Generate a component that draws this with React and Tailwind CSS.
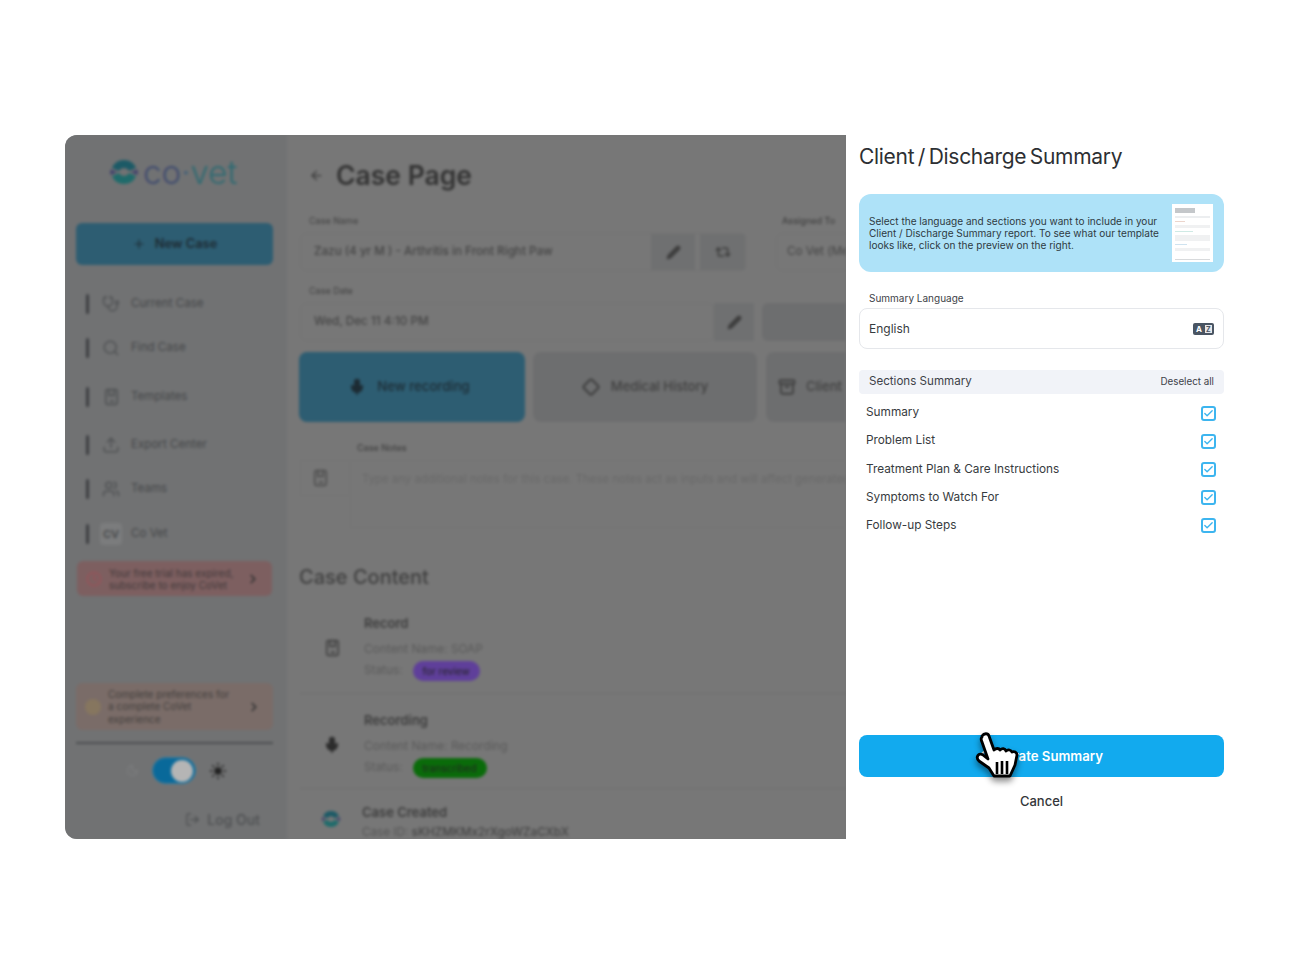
import React from "react";
import {
  ArrowLeft,
  Archive,
  ChevronRight,
  Clock,
  Diamond,
  LogOut,
  Mic,
  Moon,
  Pencil,
  Plus,
  Repeat2,
  Search,
  Stethoscope,
  Sun,
  Upload,
  Users,
  Check,
} from "lucide-react";

const font = { fontFamily: "Inter, 'Noto Sans', sans-serif" };

const NoteIcon = ({ className }) => (
  <svg viewBox="0 0 18 22" fill="none" stroke="currentColor" strokeWidth="2" className={className}>
    <rect x="2" y="2" width="14" height="18" rx="2" />
    <path d="M6 2v7h6V2M7 16h5" />
  </svg>
);

const LogoMark = ({ className }) => (
  <svg viewBox="0 0 30 30" fill="none" className={className}>
    <path d="M3 11A13 13 0 0 1 27 11L20 14C18 10 12 10 10 14z" fill="#1c5a66" />
    <path d="M1.5 12.5L8 15l-6.500 3a14 14 0 0 1 0-5.500z" fill="#3e3f6b" />
    <path d="M28.500 12.500L22 15l6.500 3a14 14 0 0 0 0-5.500z" fill="#3e3f6b" />
    <path d="M3 19A13 13 0 0 0 27 19L20 16C18 20 12 20 10 16z" fill="#1f6b6b" />
  </svg>
);

const navItems = [
  { label: "Current Case", icon: <Stethoscope size={18} />, mt: "mt-[29px]" },
  { label: "Find Case", icon: <Search size={18} />, mt: "mt-[24px]" },
  { label: "Templates", icon: <NoteIcon className="w-[15px] h-[18px]" />, mt: "mt-[29px]" },
  { label: "Export Center", icon: <Upload size={18} />, mt: "mt-[28px]" },
  { label: "Teams", icon: <Users size={18} />, mt: "mt-[24px]" },
];

const sections = [
  "Summary",
  "Problem List",
  "Treatment Plan & Care Instructions",
  "Symptoms to Watch For",
  "Follow-up Steps",
];

const Sidebar = () => (
  <aside className="w-[222px] h-[704px] shrink-0 bg-[#717273] pl-[11px] pr-[14px] pt-[19px] flex flex-col">
    <div className="flex items-center justify-center h-[36px] gap-[4px] pr-[3px]">
      <LogoMark className="w-[30px] h-[30px]" />
      <span className="text-[33px] font-light text-[#3e4a6e] leading-none">
        co<span className="text-[#3f5f78]">·</span>
        <span className="text-[#2f6a72]">vet</span>
      </span>
    </div>
    <button className="mt-[33px] h-[42px] rounded-md bg-[#2d5d72] flex items-center justify-center gap-[9px] text-[12.800px] font-semibold text-[#1d2b33]">
      <Plus size={14} /> New Case
    </button>
    {navItems.map((n) => (
      <div key={n.label} className={`${n.mt} h-[20px] flex items-center text-[#454749]`}>
        <span className="ml-[10px] w-[3px] h-[20px] rounded bg-[#3c3e41]" />
        <span className="ml-[13px] w-[18px] flex justify-center text-[#505254]">{n.icon}</span>
        <span className="ml-[11px] text-[11.600px]">{n.label}</span>
      </div>
    ))}
    <div className="mt-[25px] h-[20px] flex items-center text-[#454749]">
      <span className="ml-[10px] w-[3px] h-[20px] rounded bg-[#3c3e41]" />
      <span className="ml-[11px] w-[22px] h-[22px] rounded bg-[#7b7c7d] flex items-center justify-center text-[11px] font-semibold">
        CV
      </span>
      <span className="ml-[9px] text-[11.600px]">Co Vet</span>
    </div>
    <div className="mt-[17px] mx-[1px] h-[35px] rounded-md bg-[#7d5f60] flex items-center pl-[9px] pr-[12px]">
      <Clock size={16} className="text-[#9a5158] shrink-0" />
      <span className="ml-[7px] flex-1 text-[10px] leading-[12px] text-[#433a3b]">
        Your free trial has expired, subscribe to enjoy CoVet
      </span>
      <ChevronRight size={14} className="text-[#333] shrink-0" strokeWidth={3} />
    </div>
    <div className="mt-[87px] h-[47px] rounded-md bg-[#7a6c68] flex items-center pl-[9px] pr-[12px]">
      <span className="w-[16px] h-[16px] rounded-full bg-[#86765f] shrink-0" />
      <span className="ml-[7px] w-[128px] text-[10px] leading-[12.500px] text-[#433f3d]">
        Complete preferences for a complete CoVet experience
      </span>
      <ChevronRight size={14} className="ml-auto text-[#333] shrink-0" strokeWidth={3} />
    </div>
    <div className="mt-[12px] h-[2px] bg-[#4d4f51]" />
    <div className="mt-[13px] flex items-center justify-center gap-[13px] pl-[4px]">
      <Moon size={13} className="text-[#7e7f80]" />
      <span className="w-[44px] h-[27px] rounded-full bg-[#09699a] border border-[#3d7f9f] flex items-center justify-end pr-[2px]">
        <span className="w-[22px] h-[22px] rounded-full bg-[#b5b5b5]" />
      </span>
      <Sun size={18} className="text-[#222]" fill="#222" />
    </div>
    <div className="mt-[25px] flex items-center justify-end gap-[7px] pr-[13px] text-[#4d4f51]">
      <LogOut size={15} />
      <span className="text-[14px] font-medium">Log Out</span>
    </div>
  </aside>
);

const ContentRow = ({ icon, title, name, status, pill, mt }) => (
  <div className={`flex ${mt}`}>
    <div className="w-[64px] flex justify-center items-center">{icon}</div>
    <div>
      <div className="text-[13px] font-semibold leading-[16px] text-[#3c3c3c]">{title}</div>
      <div className="mt-[10px] text-[11.800px] leading-[16px] text-[#5a5a5a]">Content Name: {name}</div>
      <div className="mt-[4px] flex items-center h-[20px] text-[11.800px] text-[#5a5a5a]">
        Status:
        <span className={`ml-[10px] h-[20px] px-[10px] rounded-full flex items-center text-[10px] text-[#222] ${pill}`}>
          {status}
        </span>
      </div>
    </div>
  </div>
);

const MainArea = () => (
  <main className="flex-1 min-w-0 bg-[#777777] pl-[13px] pt-[22px] overflow-hidden">
    <div className="flex items-center pl-[9px] h-[36px] text-[#3a3a3a]">
      <ArrowLeft size={15} />
      <h1 className="ml-[12px] text-[26.500px] font-semibold leading-none text-[#333]">Case Page</h1>
    </div>
    <div className="mt-[22px] flex w-[600px]">
      <div className="w-[446px] shrink-0">
        <div className="pl-[9px] text-[9px] leading-[12px] text-[#3f3f3f]">Case Name</div>
        <div className="mt-[6px] h-[38px] flex border border-[#727272] rounded-md">
          <span className="flex-1 pl-[13px] self-center text-[11.700px] font-medium text-[#444] whitespace-nowrap">
            Zazu (4 yr M ) - Arthritis in Front Right Paw
          </span>
          <span className="w-[44px] bg-[#6f7071] flex items-center justify-center">
            <Pencil size={15} className="text-[#3e3e3e]" fill="#3e3e3e" />
          </span>
          <span className="w-[45px] ml-[5px] bg-[#6f7071] flex items-center justify-center">
            <Repeat2 size={16} className="text-[#3e3e3e]" strokeWidth={2.5} />
          </span>
        </div>
      </div>
      <div className="ml-[30px] shrink-0">
        <div className="pl-[6px] text-[9px] leading-[12px] font-medium text-[#3f3f3f]">Assigned To</div>
        <div className="mt-[6px] h-[38px] w-[200px] pl-[10px] flex items-center border border-[#727272] rounded-md text-[11.700px] text-[#444]">
          Co Vet (Me)
        </div>
      </div>
    </div>
    <div className="mt-[14px] pl-[9px] text-[9px] leading-[12px] text-[#3f3f3f]">Case Date</div>
    <div className="mt-[6px] flex w-[600px] h-[38px]">
      <div className="w-[414px] shrink-0 border border-[#727272] rounded-md pl-[13px] flex items-center text-[11.700px] font-medium text-[#444]">
        Wed, Dec 11 4:10 PM
      </div>
      <span className="w-[40px] shrink-0 bg-[#6f7071] flex items-center justify-center">
        <Pencil size={15} className="text-[#3e3e3e]" fill="#3e3e3e" />
      </span>
      <span className="ml-[8px] w-[200px] shrink-0 bg-[#6d6e6f] rounded-md" />
    </div>
    <div className="mt-[11px] -ml-px flex w-[700px] h-[70px] gap-[8px]">
      <div className="w-[226px] shrink-0 rounded-lg bg-[#2d5d72] flex items-center justify-center gap-[11px] pr-[6px] text-[13.200px] font-medium text-[#1d2b33]">
        <Mic size={18} fill="#1d2b33" />
        New recording
      </div>
      <div className="w-[224px] shrink-0 rounded-lg bg-[#6d6e6f] flex items-center justify-center gap-[11px] text-[13px] font-medium text-[#404040]">
        <Diamond size={18} strokeWidth={3} />
        Medical History
      </div>
      <div className="w-[224px] shrink-0 ml-[1px] rounded-lg bg-[#6d6e6f] flex items-center pl-[12px] gap-[10px] text-[13px] font-medium text-[#404040]">
        <Archive size={18} strokeWidth={2.5} />
        Client Summary
      </div>
    </div>
    <div className="mt-[20px] pl-[57px] text-[9px] leading-[12px] font-medium text-[#3f3f3f]">Case Notes</div>
    <div className="mt-[6px] flex w-[700px]">
      <div className="w-[50px] h-[36px] shrink-0 border border-[#747474] flex items-center justify-center pr-[10px] text-[#4e4e4e]">
        <NoteIcon className="w-[15px] h-[18px]" />
      </div>
      <div className="flex-1 h-[68px] border border-[#747474] pl-[11px] pt-[10px] text-[11.400px] text-[#686868] whitespace-nowrap overflow-hidden">
        Type any additional notes for this case. These notes act as inputs and will affect generated content.
      </div>
    </div>
    <h2 className="mt-[35px] -ml-px text-[20px] leading-[28px] font-medium text-[#404040]">Case Content</h2>
    <ContentRow
      mt="mt-[24px]"
      icon={<NoteIcon className="w-[15px] h-[18px] text-[#404040]" />}
      title="Record"
      name="SOAP"
      status="for review"
      pill="bg-[#5f3f9a]"
    />
    <div className="mt-[12px] h-px bg-[#6e6e6e]" />
    <ContentRow
      mt="mt-[18px]"
      icon={<Mic size={18} className="text-[#2c2c2c]" fill="#2c2c2c" />}
      title="Recording"
      name="Recording"
      status="transcribed"
      pill="bg-[#0a6b0a]"
    />
    <div className="mt-[10px] h-px bg-[#6e6e6e]" />
    <div className="flex mt-[15px]">
      <div className="w-[62px] flex justify-center items-center pb-[6px]">
        <LogoMark className="w-[20px] h-[20px]" />
      </div>
      <div>
        <div className="text-[13px] font-semibold leading-[16px] text-[#3c3c3c]">Case Created</div>
        <div className="mt-[4px] text-[11.700px] leading-[16px] text-[#555] whitespace-nowrap">
          Case ID: <span className="font-medium text-[#444]">sKHZMKMx2rXgoWZaCXbX</span>
        </div>
      </div>
    </div>
  </main>
);

const HandCursor = () => (
  <svg
    viewBox="0 0 45 52"
    className="absolute left-[116px] top-[-3px] w-[45px] h-[52px] drop-shadow-[0_4px_3px_rgba(0,0,0,0.45)]"
  >
    <path
      d="M7 4c2-3 6-3 7 0l5 14c2-2 5-2 6 0 2-2 5-2 6 1 2-2 5-1 6 1 2-1 5 0 5 3l-2 10-5 11H19l-5-8-10-7c-4-4 0-9 4-6l5 4-6-17c-1-2-1-4 0-5z"
      fill="#fff"
      stroke="#000"
      strokeWidth="2.800"
      strokeLinejoin="round"
    />
    <path d="M22 30v12M27 29v13M32 29v13" stroke="#000" strokeWidth="2.600" />
  </svg>
);

const SummaryPanel = () => (
  <section className="w-[365px] ml-[13px] shrink-0 h-[704px] flex flex-col">
    <h2 className="mt-[9px] text-[21px] leading-[26px] text-[#2d2f33] tracking-[-0.3px] [word-spacing:-2px]">
      Client / Discharge Summary
    </h2>
    <div className="mt-[24px] h-[78px] rounded-xl bg-[#aee2f8] flex items-center pl-[10px] pr-[11px]">
      <p className="flex-1 text-[10.050px] leading-[12.300px] text-[#2f3a42]">
        Select the language and sections you want to include in your Client / Discharge Summary report. To see what our template looks like, click on the preview on the right.
      </p>
      <div className="ml-[10px] w-[41px] h-[58px] shrink-0 bg-white px-[3px] pt-[4px] flex flex-col gap-[3px]">
        <span className="w-[20px] h-[5px] bg-[#c4c7ca]" />
        <span className="h-[2px] bg-[#eceef0]" />
        <span className="w-[10px] h-px bg-[#ecd5cc]" />
        <span className="h-[3px] bg-[#f0f1f2]" />
        <span className="w-[18px] h-px bg-[#cfeae5]" />
        <span className="h-[6px] bg-[#f0f1f2]" />
        <span className="w-[12px] h-px bg-[#cfe3f0]" />
        <span className="h-[3px] bg-[#f0f1f2]" />
        <span className="mt-[5px] h-px bg-[#d8dadc]" />
      </div>
    </div>
    <label className="mt-[21px] pl-[10px] text-[10px] leading-[11px] text-[#3d4248]">Summary Language</label>
    <div className="mt-[4px] h-[41px] border border-[#e5e7eb] rounded-lg flex items-center justify-between pl-[9px] pr-[9px] text-[12px] text-[#373b40]">
      English
      <svg viewBox="0 0 21 12" className="w-[21px] h-[12px]">
        <rect width="21" height="12" rx="2" fill="#4a5563" />
        <rect x="12" y="2" width="7" height="8" fill="#e5e7eb" />
        <text x="3" y="9" fontSize="8" fontWeight="700" fill="#fff">A</text>
        <text x="13" y="9" fontSize="7" fontWeight="700" fill="#4a5563">Z</text>
      </svg>
    </div>
    <div className="mt-[21px] h-[24px] rounded bg-[#f1f3f8] flex items-center justify-between pl-[10px] pr-[10px]">
      <span className="text-[11.600px] text-[#3d4248]">Sections Summary</span>
      <span className="text-[9.800px] text-[#3d4248]">Deselect all</span>
    </div>
    <ul className="mt-[5px] flex flex-col">
      {sections.map((s) => (
        <li key={s} className="h-[28.200px] flex items-center justify-between pl-[7px] pr-[8px] text-[11.800px] text-[#373b40]">
          {s}
          <span className="w-[15px] h-[15px] rounded-[3px] border-2 border-[#3db5ef] flex items-center justify-center">
            <Check size={11} strokeWidth={3} className="text-[#3db5ef]" />
          </span>
        </li>
      ))}
    </ul>
    <div className="relative mt-[195px]">
      <button className="w-full h-[42px] pt-px rounded-lg bg-[#12aaee] text-[13.200px] font-semibold text-white">
        Generate Summary
      </button>
      <HandCursor />
    </div>
    <button className="mt-[16px] text-[13px] font-medium leading-[16px] text-[#33363a]">Cancel</button>
  </section>
);

export default function App() {
  return (
    <div style={font} className="w-[1308px] h-[968px] bg-white overflow-hidden pt-[135px] pl-[65px] flex items-start">
      <div className="w-[781px] h-[704px] shrink-0 rounded-l-xl overflow-hidden bg-[#747576]">
        <div className="flex blur-[1.5px]">
          <Sidebar />
          <MainArea />
        </div>
      </div>
      <SummaryPanel />
    </div>
  );
}
